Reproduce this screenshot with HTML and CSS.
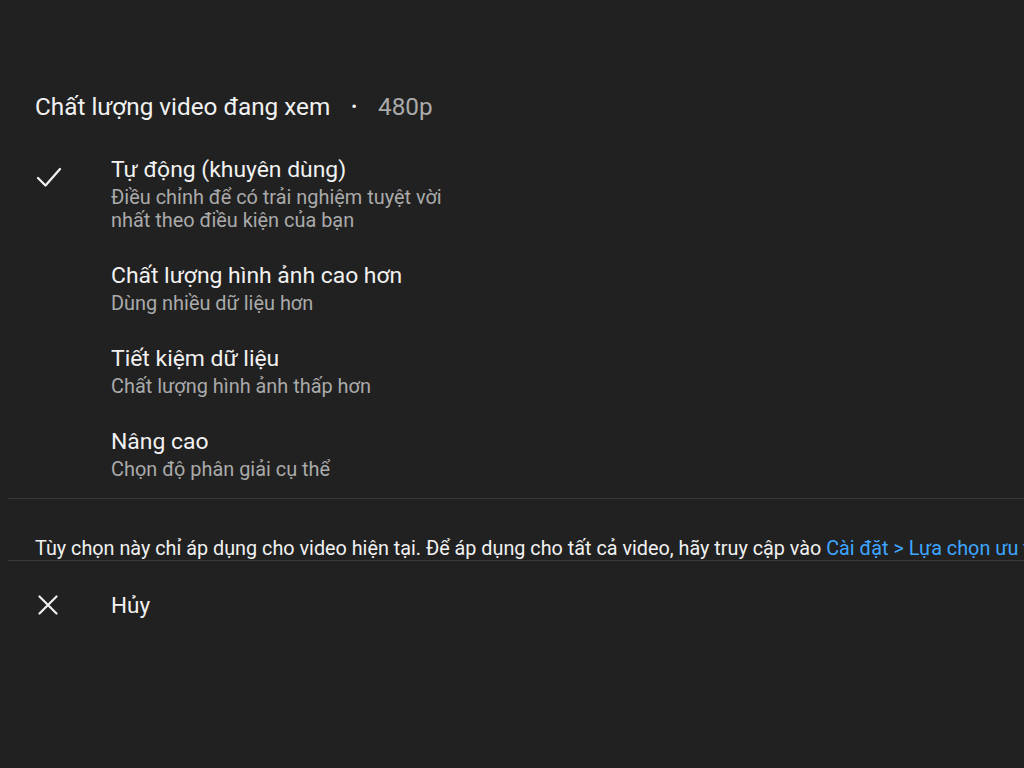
FILE: index.html
```html
<!DOCTYPE html>
<html lang="vi">
<head>
<meta charset="utf-8">
<link rel="stylesheet" href="styles.css">
</head>
<body>
<div class="sheet">
  <div class="header">
    <span class="header-title">Chất lượng video đang xem</span>
    <span class="dot">•</span>
    <span class="header-value">480p</span>
  </div>
  <ul class="options">
    <li class="option">
      <span class="option-icon">
        <svg width="26" height="22" viewBox="0 0 26 22"><path d="M2 12 L9.5 19.5 L24 3" fill="none" stroke="#f1f1f1" stroke-width="2.3" stroke-linecap="round" stroke-linejoin="round"/></svg>
      </span>
      <div class="option-text">
        <div class="option-title">Tự động (khuyên dùng)</div>
        <div class="option-sub">Điều chỉnh để có trải nghiệm tuyệt vời<br>nhất theo điều kiện của bạn</div>
      </div>
    </li>
    <li class="option">
      <span class="option-icon"></span>
      <div class="option-text">
        <div class="option-title">Chất lượng hình ảnh cao hơn</div>
        <div class="option-sub">Dùng nhiều dữ liệu hơn</div>
      </div>
    </li>
    <li class="option">
      <span class="option-icon"></span>
      <div class="option-text">
        <div class="option-title">Tiết kiệm dữ liệu</div>
        <div class="option-sub">Chất lượng hình ảnh thấp hơn</div>
      </div>
    </li>
    <li class="option">
      <span class="option-icon"></span>
      <div class="option-text">
        <div class="option-title">Nâng cao</div>
        <div class="option-sub">Chọn độ phân giải cụ thể</div>
      </div>
    </li>
  </ul>
  <div class="note">Tùy chọn này chỉ áp dụng cho video hiện tại. Để áp dụng cho tất cả video, hãy truy cập vào <span class="link">Cài đặt &gt; Lựa chọn ưu tiên</span></div>
  <div class="cancel">
    <span class="option-icon">
      <svg width="22" height="22" viewBox="0 0 22 22"><path d="M2.5 2.5 L19.5 19.5 M19.5 2.5 L2.5 19.5" fill="none" stroke="#f1f1f1" stroke-width="2.2" stroke-linecap="round"/></svg>
    </span>
    <span class="cancel-label">Hủy</span>
  </div>
</div>
</body>
</html>
```
FILE: styles.css
```css
html, body {
  margin: 0;
  padding: 0;
  background: #212121;
}
body {
  font-family: Roboto, "Noto Sans", sans-serif;
  color: #f1f1f1;
  width: 1024px;
  height: 768px;
  overflow: hidden;
}
.sheet {
  padding-top: 91px;
}
.header {
  display: flex;
  align-items: center;
  height: 30px;
  padding-left: 35px;
  font-size: 24.3px;
}
.header-title {
  color: #f1f1f1;
}
.dot {
  font-size: 17px;
  margin: 0 21px 0 21px;
  color: #f1f1f1;
}
.header-value {
  color: #aaaaaa;
}
.options {
  list-style: none;
  margin: 19px 0 0 8px;
  padding: 0 0 3px 0;
  border-bottom: 1px solid #3a3a3a;
}
.option {
  display: flex;
  padding: 16px 0 14px;
}
.option-icon {
  width: 103px;
  flex: none;
  display: flex;
  justify-content: flex-start;
  padding-left: 28px;
  box-sizing: border-box;
  padding-top: 10px;
}
.option-title {
  font-size: 22.9px;
  line-height: 28px;
  color: #f1f1f1;
}
.option-sub {
  margin-top: 2px;
  font-size: 19.9px;
  line-height: 23px;
  color: #aaaaaa;
}
.note {
  margin-left: 8px;
  padding: 39px 0 0 27px;
  height: 22px;
  line-height: 22px;
  font-size: 19.8px;
  white-space: nowrap;
  overflow: hidden;
  color: #f1f1f1;
  border-bottom: 1px solid #3a3a3a;
}
.link {
  color: #3ea6ff;
}
.cancel {
  display: flex;
  align-items: center;
  margin-left: 8px;
  margin-top: 30px;
  height: 28px;
}
.cancel .option-icon {
  padding-top: 0;
  padding-left: 29px;
}
.cancel-label {
  font-size: 22.5px;
  color: #f1f1f1;
}
```
